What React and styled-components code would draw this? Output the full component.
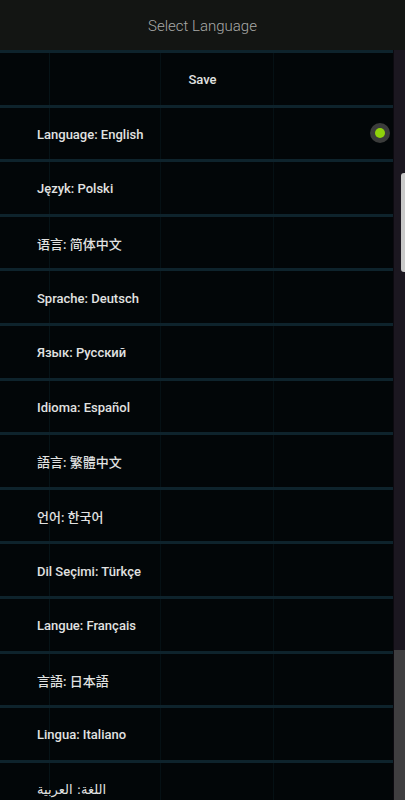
import React from "react";
import styled, { createGlobalStyle } from "styled-components";

const languages = [
  { label: "Language: English", selected: true },
  { label: "Język: Polski" },
  { label: "语言: 简体中文" },
  { label: "Sprache: Deutsch" },
  { label: "Язык: Русский" },
  { label: "Idioma: Español" },
  { label: "語言: 繁體中文" },
  { label: "언어: 한국어" },
  { label: "Dil Seçimi: Türkçe" },
  { label: "Langue: Français" },
  { label: "言語: 日本語" },
  { label: "Lingua: Italiano" },
  { label: "اللغة: العربية", rtl: true },
];

const GlobalStyle = createGlobalStyle`
  html, body {
    margin: 0;
    padding: 0;
    background: #020608;
    overflow: hidden;
  }
  body {
    font-family: Roboto, "Noto Sans", "Noto Sans CJK SC", sans-serif;
  }
`;

const Screen = styled.div`
  width: 405px;
  height: 800px;
  display: flex;
  flex-direction: column;
  overflow: hidden;
`;

const Header = styled.header`
  height: 50px;
  flex-shrink: 0;
  display: flex;
  align-items: center;
  justify-content: center;
  padding-top: 2px;
  box-sizing: border-box;
  background: #131513;
  color: #a9aaa8;
  font-size: 15px;
  font-weight: 300;
`;

const Body = styled.div`
  flex: 1;
  display: flex;
  min-height: 0;
`;

const List = styled.div`
  flex: 1;
  display: flex;
  flex-direction: column;
  background-color: #020608;
  background-image:
    linear-gradient(90deg, transparent 49px, #06131700 49px, #061317 49px, #061317 50px, transparent 50px),
    linear-gradient(90deg, transparent 160px, #051014 160px, #051014 161px, transparent 161px),
    linear-gradient(90deg, transparent 273px, #051014 273px, #051014 274px, transparent 274px);
`;

const Row = styled.div`
  height: 54.6px;
  flex-shrink: 0;
  box-sizing: border-box;
  border-top: 3px solid #0e232c;
  padding-top: 2px;
  display: flex;
  align-items: center;
  justify-content: ${(p) => (p.$center ? "center" : "space-between")};
  padding-left: ${(p) => (p.$center ? "12px" : "37px")};
  padding-right: ${(p) => (p.$center ? "0" : "3px")};
  color: #e1e2e1;
  font-size: 13px;
  font-weight: 500;
`;

const Label = styled.span`
  font-family: ${(p) =>
    p.$rtl
      ? '"DejaVu Sans", "Noto Sans", sans-serif'
      : 'Roboto, "Noto Sans CJK SC", "Noto Sans CJK KR", sans-serif'};
  font-weight: ${(p) => (p.$rtl ? 400 : 500)};
`;

const Radio = styled.span`
  width: 20px;
  height: 20px;
  margin-top: -2px;
  border-radius: 50%;
  background: #3b3c3b;
  display: flex;
  align-items: center;
  justify-content: center;

  &::after {
    content: "";
    width: 10px;
    height: 10px;
    border-radius: 50%;
    background: #8fd20b;
  }
`;

const Rail = styled.div`
  width: 12px;
  flex-shrink: 0;
  display: flex;
  flex-direction: column;
  position: relative;
  border-left: 1px solid #0c0a10;
  box-sizing: border-box;
`;

const RailTop = styled.div`
  flex: 1;
  background: #1b1720;
`;

const RailBottom = styled.div`
  height: 150px;
  background: #3f3e40;
`;

const Thumb = styled.div`
  position: absolute;
  right: 0;
  top: 123px;
  width: 4px;
  height: 99px;
  border-radius: 3px 0 0 3px;
  background: #c9c9c9;
`;

export default function App() {
  return (
    <Screen>
      <GlobalStyle />
      <Header>Select Language</Header>
      <Body>
        <List>
          <Row $center>Save</Row>
          {languages.map((lang) => (
            <Row key={lang.label}>
              <Label $rtl={lang.rtl} dir={lang.rtl ? "rtl" : undefined}>
                {lang.label}
              </Label>
              {lang.selected && <Radio />}
            </Row>
          ))}
        </List>
        <Rail>
          <RailTop />
          <RailBottom />
          <Thumb />
        </Rail>
      </Body>
    </Screen>
  );
}
